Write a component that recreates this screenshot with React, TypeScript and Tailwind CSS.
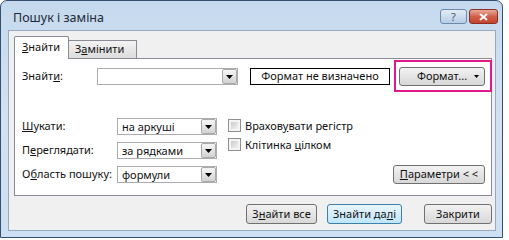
import React from "react"

const Arrow = () => (
  <svg width="7" height="4" viewBox="0 0 7 4">
    <polygon points="0,0 7,0 3.5,4" fill="#000" />
  </svg>
)

const DropBtn = () => (
  <div className="w-[15px] h-full flex items-center justify-center border border-[#a9a9a9] rounded-[2px] bg-gradient-to-b from-[#f6f6f6] to-[#d2d2d2]">
    <Arrow />
  </div>
)

const Combo = ({ text, w }: { text: string; w: string }) => (
  <div className={`flex h-[17px] ${w} border border-[#abadb3] bg-white`}>
    <div className="flex-1 pl-[4px] leading-[15px]">{text}</div>
    <DropBtn />
  </div>
)

const Check = ({ children }: { children: React.ReactNode }) => (
  <div className="flex items-center gap-[4px] h-[13px]">
    <div className="w-[13px] h-[13px] border border-[#8e8f8f] bg-[#f4f4f4] p-[2px]">
      <div className="w-full h-full bg-gradient-to-br from-[#cbcbcb] to-[#f2f2f2]" />
    </div>
    <span className="leading-[13px]">{children}</span>
  </div>
)

const Btn = ({ children, w, def }: { children: React.ReactNode; w: string; def?: boolean }) => (
  <div
    className={`${w} h-[20px] flex items-center justify-center rounded-[3px] border ${
      def
        ? "border-[#3c7fb1] bg-gradient-to-b from-[#eaf6fd] to-[#bee6fd]"
        : "border-[#707070] bg-gradient-to-b from-[#f2f2f2] to-[#d8d8d8]"
    }`}
  >
    {children}
  </div>
)

export default function App() {
  return (
    <div className="w-[509px] h-[240px] bg-white overflow-hidden font-['Noto_Sans',sans-serif] text-[11px] text-[#111]">
      <div className="w-[503px] h-[238px] rounded-t-[7px] border border-[#34506e] bg-gradient-to-b from-[#c5d9ee] via-[#d3e2f2] to-[#cddff2] flex flex-col">
        {/* title bar */}
        <div className="h-[29px] flex items-center pl-[12px] pr-[4px]">
          <span className="text-[12.5px] mt-[5px] text-[#1e2a36]">Пошук і заміна</span>
          <div className="ml-auto flex gap-[2px] mt-[2px]">
            <div className="w-[27px] h-[15px] rounded-[3px] border border-[#6d8aa8] bg-gradient-to-b from-[#e2ecf6] to-[#b7cde5] flex items-center justify-center text-[11px] leading-none text-[#4a5d72]">
              ?
            </div>
            <div className="w-[29px] h-[15px] rounded-[3px] border border-[#8b2f22] bg-gradient-to-b from-[#e9a99b] via-[#d1604a] to-[#c4422c] flex items-center justify-center">
              <svg width="9" height="8" viewBox="0 0 9 8">
                <path d="M1 1 L8 7 M8 1 L1 7" stroke="#fff" strokeWidth="2" />
              </svg>
            </div>
          </div>
        </div>

        {/* client area */}
        <div className="flex-1 ml-[7px] mr-[6px] mb-[6px] bg-[#f0f0f0] border border-[#95a9c0] flex flex-col">
          {/* tabs */}
          <div className="flex items-end pl-[5px] mt-[5px] h-[23px] relative z-10">
            <div className="w-[55px] h-[23px] bg-white border border-b-0 border-[#898c95] rounded-t-[2px] flex items-center pl-[7px] pb-[1px]">
              <span>
                <span className="underline">З</span>найти
              </span>
            </div>
            <div className="w-[68px] h-[18px] mb-[1px] bg-gradient-to-b from-[#f3f3f3] to-[#dcdcdc] border border-b-0 border-l-0 border-[#898c95] flex items-center pl-[6px]">
              <span>
                З<span className="underline">а</span>мінити
              </span>
            </div>
          </div>

          {/* panel */}
          <div className="ml-[5px] -mt-[1px] w-[478px] h-[138px] bg-white border border-[#898c95] relative flex flex-col">
            <div className="flex items-center mt-[8px] pl-[7px]">
              <span className="w-[75px]">
                Знайт<span className="underline">и</span>:
              </span>
              <Combo text="" w="w-[141px]" />
              <div className="ml-[12px] w-[140px] h-[17px] border border-black flex items-center justify-center">
                Формат не визначено
              </div>
              <div className="ml-[9px] w-[86px] h-[19px] rounded-[3px] border border-[#707070] bg-gradient-to-b from-[#f2f2f2] to-[#d8d8d8] flex items-center relative">
                <span className="flex-1 text-center">Формат...</span>
                <div className="absolute right-[5px] top-[7px]">
                  <svg width="5" height="3" viewBox="0 0 5 3">
                    <polygon points="0,0 5,0 2.5,3" fill="#000" />
                  </svg>
                </div>
              </div>
            </div>

            <div className="flex mt-[32px] pl-[7px]">
              <div className="flex flex-col gap-[7px]">
                <div className="flex items-center">
                  <span className="w-[95px]">
                    <span className="underline">Ш</span>укати:
                  </span>
                  <Combo text="на аркуші" w="w-[100px]" />
                </div>
                <div className="flex items-center">
                  <span className="w-[95px]">
                    П<span className="underline">е</span>реглядати:
                  </span>
                  <Combo text="за рядками" w="w-[100px]" />
                </div>
                <div className="flex items-center">
                  <span className="w-[95px]">
                    О<span className="underline">б</span>ласть пошуку:
                  </span>
                  <Combo text="формули" w="w-[100px]" />
                </div>
              </div>
              <div className="flex flex-col gap-[6px] ml-[11px] mt-[1px]">
                <Check>
                  Врахов<span className="underline">у</span>вати регістр
                </Check>
                <Check>
                  Клітинка <span className="underline">ц</span>ілком
                </Check>
              </div>
              <div className="ml-auto mr-[6px] mt-[47px]">
                <div className="w-[92px] h-[19px] rounded-[3px] border border-[#707070] bg-gradient-to-b from-[#f2f2f2] to-[#d8d8d8] flex items-center justify-center">
                  <span>
                    <span className="underline">П</span>араметри &lt; &lt;
                  </span>
                </div>
              </div>
            </div>

            {/* highlight */}
            <div className="absolute left-[379px] top-[1px] w-[98px] h-[32px] border-2 border-[#e2198c]" />
          </div>

          {/* buttons */}
          <div className="ml-[5px] w-[478px] flex justify-end mt-[8px]">
            <Btn w="w-[71px]">
              З<span className="underline">н</span>айти все
            </Btn>
            <div className="ml-[10px]">
              <Btn w="w-[75px]" def>
                Знайти да<span className="underline">л</span>і
              </Btn>
            </div>
            <div className="ml-[22px]">
              <Btn w="w-[68px]">Закрити</Btn>
            </div>
          </div>
        </div>
      </div>
    </div>
  )
}
